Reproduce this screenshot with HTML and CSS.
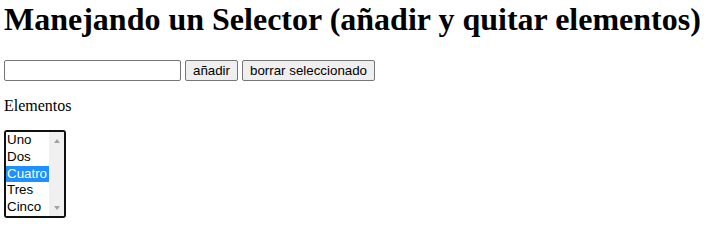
FILE: index.html
```html
<!DOCTYPE html>
<html lang="es">
<head>
<meta charset="utf-8">
<title>Manejando un Selector</title>
<link rel="stylesheet" href="styles.css">
</head>
<body>
<h1 class="titulo">Manejando un Selector (añadir y quitar elementos)</h1>
<div class="controles">
  <input class="campo" type="text">
  <button class="boton boton-anadir" type="button">añadir</button>
  <button class="boton boton-borrar" type="button">borrar seleccionado</button>
</div>
<p class="etiqueta">Elementos</p>
<div class="lista-marco">
  <select class="lista" size="5">
    <option>Uno</option>
    <option>Dos</option>
    <option selected>Cuatro</option>
    <option>Tres</option>
    <option>Cinco</option>
  </select>
  <div class="barra" aria-hidden="true">
    <span class="barra-boton"><span class="flecha flecha-arriba"></span></span>
    <span class="barra-boton"><span class="flecha flecha-abajo"></span></span>
  </div>
</div>
</body>
</html>
```

FILE: styles.css
```css
html, body {
  background: #ffffff;
}
body {
  margin: 0;
  padding: 0 0 0 4px;
  font-family: "Liberation Serif", "Times New Roman", serif;
  font-size: 16px;
  color: #000000;
}
.titulo {
  margin: 1px 0 22px 0;
  font-size: 32px;
  line-height: 37px;
  font-weight: bold;
}
.controles {
  display: flex;
  gap: 4px;
  height: 21px;
}
.campo {
  box-sizing: border-box;
  width: 177px;
  height: 21px;
  margin: 0;
  padding: 1px 2px;
  border: 1px solid #767676;
  border-radius: 2px;
  background: #ffffff;
  font-family: "Liberation Sans", Arial, sans-serif;
  font-size: 13.33px;
}
.boton {
  box-sizing: border-box;
  height: 21px;
  margin: 0;
  padding: 0 6px;
  border: 1px solid #767676;
  border-radius: 2px;
  background: #efefef;
  color: #000000;
  font-family: "Liberation Sans", Arial, sans-serif;
  font-size: 13.33px;
  line-height: 17px;
}
.boton-anadir {
  width: 53px;
}
.boton-borrar {
  width: 133px;
}
.etiqueta {
  margin: 16px 0 15px 0;
  line-height: 18px;
}
.lista-marco {
  display: flex;
  box-sizing: border-box;
  width: 62px;
  height: 88px;
  border: 2px solid #101010;
  border-radius: 3px;
  overflow: hidden;
  background: #ffffff;
}
.lista {
  display: block;
  box-sizing: border-box;
  width: 43px;
  height: 84px;
  margin: 0;
  padding: 0;
  border: none;
  border-radius: 0;
  outline: none;
  overflow: hidden;
  background: #ffffff;
  font-family: "Liberation Sans", Arial, sans-serif;
  font-size: 13.33px;
  color: #000000;
}
.lista option {
  padding: 0 0 0 1px;
  height: 16.8px;
  line-height: 16.8px;
  min-height: 0;
}
.lista option:checked {
  background: #1e90ff linear-gradient(#1e90ff, #1e90ff);
  color: #ffffff;
}
.barra {
  display: flex;
  flex-direction: column;
  justify-content: space-between;
  width: 15px;
  height: 84px;
  background: #f0f0f0;
}
.barra-boton {
  display: flex;
  align-items: center;
  justify-content: center;
  height: 17px;
}
.flecha {
  width: 0;
  height: 0;
  border-left: 3.5px solid transparent;
  border-right: 3.5px solid transparent;
}
.flecha-arriba {
  border-bottom: 4px solid #a3a3a3;
}
.flecha-abajo {
  border-top: 4px solid #a3a3a3;
}
```
